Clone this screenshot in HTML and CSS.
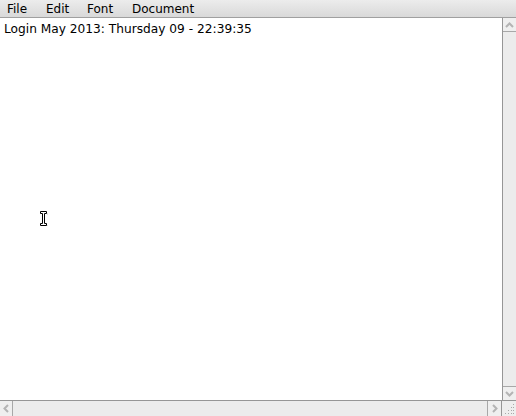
FILE: index.html
```html
<!DOCTYPE html>
<html>
<head>
<meta charset="utf-8">
<link rel="stylesheet" href="styles.css">
</head>
<body>
<div class="window">
  <div class="menubar">
    <span class="menu">File</span>
    <span class="menu">Edit</span>
    <span class="menu">Font</span>
    <span class="menu">Document</span>
  </div>
  <div class="main">
    <div class="editor">
      <div class="text">Login May 2013: Thursday 09 - 22:39:35</div>
      <svg class="ibeam" width="10" height="18" viewBox="0 0 10 18">
        <path d="M2.5 15.5h6" stroke="#c8c8c8" stroke-width="1" fill="none"/>
        <path d="M8.5 3.5v1" stroke="#c8c8c8" stroke-width="1" fill="none"/>
        <path d="M1.5 1.5h6v2h-2v10h2v2h-6v-2h2v-10h-2z" fill="#fff" stroke="#000" stroke-width="1"/>
      </svg>
    </div>
    <div class="vscroll">
      <div class="btn up"><svg width="9" height="6" viewBox="0 0 9 6"><path d="M1 5l3.5-3.5L8 5" fill="none" stroke="#b4b4b4" stroke-width="2"/></svg></div>
      <div class="track"></div>
      <div class="btn down"><svg width="9" height="6" viewBox="0 0 9 6"><path d="M1 1l3.5 3.5L8 1" fill="none" stroke="#b4b4b4" stroke-width="2"/></svg></div>
    </div>
  </div>
  <div class="hbar">
    <div class="hbtn left"><svg width="6" height="9" viewBox="0 0 6 9"><path d="M5 1L1.5 4.5 5 8" fill="none" stroke="#b4b4b4" stroke-width="2"/></svg></div>
    <div class="htrack"></div>
    <div class="hbtn right"><svg width="6" height="9" viewBox="0 0 6 9"><path d="M1 1l3.5 3.5L1 8" fill="none" stroke="#b4b4b4" stroke-width="2"/></svg></div>
    <div class="corner">
      <svg width="14" height="15" viewBox="0 0 14 15">
        <g fill="#a8a8a8">
          <rect x="11" y="3" width="1" height="1"/>
          <rect x="9" y="6" width="1" height="1"/><rect x="11" y="6" width="1" height="1"/>
          <rect x="6" y="9" width="1" height="1"/><rect x="9" y="9" width="1" height="1"/><rect x="11" y="9" width="1" height="1"/>
          <rect x="3" y="12" width="1" height="1"/><rect x="6" y="12" width="1" height="1"/><rect x="9" y="12" width="1" height="1"/><rect x="11" y="12" width="1" height="1"/>
        </g>
      </svg>
    </div>
  </div>
</div>
</body>
</html>
```
FILE: styles.css
```css
html, body {
  margin: 0;
  padding: 0;
  background: #ffffff;
}
.window {
  width: 516px;
  height: 416px;
  display: flex;
  flex-direction: column;
  font-family: "DejaVu Sans", sans-serif;
  font-size: 12px;
  color: #000;
}
.menubar {
  height: 17px;
  flex: none;
  display: flex;
  align-items: center;
  background: linear-gradient(#ececec, #d9d9d9);
  border-bottom: 1px solid #a0a0a0;
  box-sizing: content-box;
  padding-left: 7px;
}
.menu {
  line-height: 17px;
  padding-top: 1px;
}
.menu:nth-child(1) { width: 39px; }
.menu:nth-child(2) { width: 41px; }
.menu:nth-child(3) { width: 45px; }
.main {
  flex: 1;
  display: flex;
  min-height: 0;
}
.editor {
  flex: 1;
  position: relative;
  background: #fff;
}
.text {
  padding: 4px 0 0 4px;
  line-height: 15px;
  font-size: 12.2px;
}
.ibeam {
  position: absolute;
  left: 39px;
  top: 192px;
}
.vscroll {
  width: 13px;
  flex: none;
  border-left: 1px solid #969696;
  background: #eeeeee;
  display: flex;
  flex-direction: column;
}
.btn {
  height: 13px;
  flex: none;
  display: flex;
  align-items: center;
  justify-content: center;
  background: #efefef;
}
.btn.up { border-bottom: 1px solid #a8a8a8; }
.btn.down { border-top: 1px solid #a8a8a8; }
.track {
  flex: 1;
  background: #ececec;
}
.hbar {
  height: 15px;
  flex: none;
  display: flex;
  border-top: 1px solid #969696;
  background: #eeeeee;
}
.hbtn {
  width: 12px;
  flex: none;
  display: flex;
  align-items: center;
  justify-content: center;
  background: #efefef;
}
.hbtn.left { border-right: 1px solid #a8a8a8; }
.hbtn.right { border-left: 1px solid #a8a8a8; width: 13px; }
.htrack {
  flex: 1;
  background: #ececec;
}
.corner {
  width: 14px;
  flex: none;
  border-left: 1px solid #969696;
  background: #eeeeee;
}
```
